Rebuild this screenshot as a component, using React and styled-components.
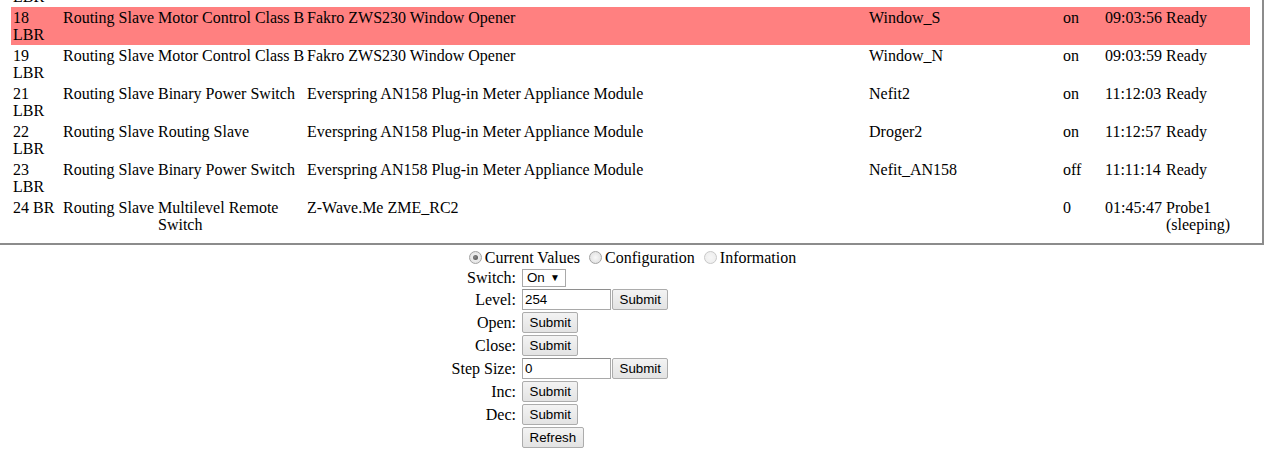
import React, { useState } from "react";
import styled, { createGlobalStyle } from "styled-components";

const GlobalStyle = createGlobalStyle`
  html, body {
    margin: 0;
    padding: 0;
    background: #ffffff;
  }
  body {
    font-family: "Liberation Serif", "Times New Roman", serif;
    font-size: 16px;
    color: #000000;
  }
`;

const columns = [
  { key: "node", width: 50 },
  { key: "basic", width: 95, nowrap: true },
  { key: "generic", width: 149 },
  { key: "product", width: 562 },
  { key: "name", width: 194 },
  { key: "level", width: 42 },
  { key: "time", width: 61 },
  { key: "state", width: 86 },
];

const nodes = [
  {
    id: "16",
    role: "LBR",
    basic: "Routing Slave",
    generic: "Binary Power Switch",
    product: "Everspring AN158 Plug-in Meter Appliance Module",
    name: "Pomp",
    level: "on",
    time: "08:52:10",
    state: "Ready",
  },
  {
    id: "17",
    role: "LBR",
    basic: "Routing Slave",
    generic: "Binary Power Switch",
    product: "Everspring AN158 Plug-in Meter Appliance Module",
    name: "Boiler",
    level: "on",
    time: "09:01:12",
    state: "Ready",
  },
  {
    id: "18",
    role: "LBR",
    basic: "Routing Slave",
    generic: "Motor Control Class B",
    product: "Fakro ZWS230 Window Opener",
    name: "Window_S",
    level: "on",
    time: "09:03:56",
    state: "Ready",
    selected: true,
  },
  {
    id: "19",
    role: "LBR",
    basic: "Routing Slave",
    generic: "Motor Control Class B",
    product: "Fakro ZWS230 Window Opener",
    name: "Window_N",
    level: "on",
    time: "09:03:59",
    state: "Ready",
  },
  {
    id: "21",
    role: "LBR",
    basic: "Routing Slave",
    generic: "Binary Power Switch",
    product: "Everspring AN158 Plug-in Meter Appliance Module",
    name: "Nefit2",
    level: "on",
    time: "11:12:03",
    state: "Ready",
  },
  {
    id: "22",
    role: "LBR",
    basic: "Routing Slave",
    generic: "Routing Slave",
    product: "Everspring AN158 Plug-in Meter Appliance Module",
    name: "Droger2",
    level: "on",
    time: "11:12:57",
    state: "Ready",
  },
  {
    id: "23",
    role: "LBR",
    basic: "Routing Slave",
    generic: "Binary Power Switch",
    product: "Everspring AN158 Plug-in Meter Appliance Module",
    name: "Nefit_AN158",
    level: "off",
    time: "11:11:14",
    state: "Ready",
  },
  {
    id: "24",
    role: "BR",
    basic: "Routing Slave",
    generic: "Multilevel Remote Switch",
    product: "Z-Wave.Me ZME_RC2",
    name: "",
    level: "0",
    time: "01:45:47",
    state: "Probe1 (sleeping)",
  },
];

// node list box, scrolled down to its last rows
const NodeBox = styled.div`
  box-sizing: border-box;
  width: 1264px;
  height: 245px;
  padding: 0 12px 8px 11px;
  border-right: 2px solid #8c8c8c;
  border-bottom: 2px solid #8c8c8c;
  overflow: hidden;
  display: flex;
  flex-direction: column;
  justify-content: flex-end;
`;

const NodeTable = styled.table`
  flex-shrink: 0;
  width: 100%;
  table-layout: fixed;
  border-collapse: collapse;
  border-spacing: 0;
  font-size: 16px;
  line-height: 17px;
`;

const NodeRow = styled.tr`
  background: ${(p) => (p.$selected ? "#ff8080" : "transparent")};
`;

const Cell = styled.td`
  box-sizing: border-box;
  padding: 2px 0 2px 2px;
  vertical-align: top;
  text-align: left;
  white-space: ${(p) => (p.$nowrap ? "nowrap" : "normal")};
`;

// form below the list
const Form = styled.div`
  margin-top: 2px;
  display: grid;
  grid-template-columns: 70px 302px;
  justify-content: center;
  column-gap: 6px;
  row-gap: 2px;
  align-items: center;
`;

const ModeRow = styled.div`
  grid-column: 1 / span 2;
  text-align: center;
  line-height: 19px;
  height: 18px;
  padding-top: 1px;
  padding-right: 10px;
`;

const ModeLabel = styled.label`
  cursor: default;
`;

const Radio = styled.input.attrs({ type: "radio" })`
  appearance: none;
  -webkit-appearance: none;
  box-sizing: border-box;
  width: 13px;
  height: 13px;
  margin: 3px 3px 0 5px;
  border-radius: 50%;
  border: 1px solid ${(p) => (p.disabled ? "#c8c8c8" : "#a2a2a2")};
  background: ${(p) =>
    p.disabled
      ? "radial-gradient(circle, #f6f6f6 0, #ececec 100%)"
      : "radial-gradient(circle, #f8f8f8 0, #dcdcdc 100%)"};
  vertical-align: -1px;
  position: relative;

  &:checked::after {
    content: "";
    position: absolute;
    left: 3px;
    top: 3px;
    width: 5px;
    height: 5px;
    border-radius: 50%;
    background: radial-gradient(circle at 40% 40%, #8a8a8a 0, #4a4a4a 100%);
  }
`;

const FieldLabel = styled.div`
  text-align: right;
  line-height: 19px;
  white-space: nowrap;
`;

const Controls = styled.div`
  display: flex;
  align-items: center;
  gap: 1px;
`;

const Button = styled.button`
  box-sizing: border-box;
  height: 21px;
  padding: 0 6.5px;
  font-family: "Liberation Sans", Arial, sans-serif;
  font-size: 13.333px;
  color: #000000;
  background: linear-gradient(#f3f3f3, #e3e3e3);
  border: 1px solid #acacac;
  border-radius: 2px;
`;

const TextBox = styled.input`
  box-sizing: border-box;
  width: 89px;
  height: 21px;
  padding: 1px 2px;
  font-family: "Liberation Sans", Arial, sans-serif;
  font-size: 13.333px;
  border: 1px solid #a9a9a9;
  border-top-color: #8e8e8e;
  outline: none;
`;

const Select = styled.div`
  box-sizing: border-box;
  width: 44px;
  height: 18px;
  display: flex;
  align-items: center;
  justify-content: space-between;
  padding: 0 5px 0 4px;
  font-family: "Liberation Sans", Arial, sans-serif;
  font-size: 13.333px;
  border: 1px solid #a9a9a9;
  background: #ffffff;
`;

const Caret = styled.span`
  font-size: 10px;
  line-height: 1;
`;

function nodeCell(n, key) {
  if (key === "node") return `${n.id} ${n.role}`;
  return n[key];
}

export default function App() {
  const [mode, setMode] = useState("current");
  const [level, setLevel] = useState("254");
  const [step, setStep] = useState("0");

  return (
    <>
      <GlobalStyle />
      <NodeBox>
        <NodeTable>
          <colgroup>
            {columns.map((c) => (
              <col key={c.key} style={{ width: c.width }} />
            ))}
          </colgroup>
          <tbody>
            {nodes.map((n) => (
              <NodeRow key={n.id} $selected={n.selected}>
                {columns.map((c) => (
                  <Cell key={c.key} $nowrap={c.nowrap}>
                    {nodeCell(n, c.key)}
                  </Cell>
                ))}
              </NodeRow>
            ))}
          </tbody>
        </NodeTable>
      </NodeBox>

      <Form>
        <ModeRow>
          <ModeLabel>
            <Radio
              name="mode"
              checked={mode === "current"}
              onChange={() => setMode("current")}
            />
            Current Values
          </ModeLabel>{" "}
          <ModeLabel>
            <Radio
              name="mode"
              checked={mode === "config"}
              onChange={() => setMode("config")}
            />
            Configuration
          </ModeLabel>{" "}
          <ModeLabel>
            <Radio name="mode" disabled checked={false} onChange={() => {}} />
            Information
          </ModeLabel>
        </ModeRow>

        <FieldLabel>Switch:</FieldLabel>
        <Controls>
          <Select>
            On <Caret>▼</Caret>
          </Select>
        </Controls>

        <FieldLabel>Level:</FieldLabel>
        <Controls>
          <TextBox value={level} onChange={(e) => setLevel(e.target.value)} />
          <Button>Submit</Button>
        </Controls>

        <FieldLabel>Open:</FieldLabel>
        <Controls>
          <Button>Submit</Button>
        </Controls>

        <FieldLabel>Close:</FieldLabel>
        <Controls>
          <Button>Submit</Button>
        </Controls>

        <FieldLabel>Step Size:</FieldLabel>
        <Controls>
          <TextBox value={step} onChange={(e) => setStep(e.target.value)} />
          <Button>Submit</Button>
        </Controls>

        <FieldLabel>Inc:</FieldLabel>
        <Controls>
          <Button>Submit</Button>
        </Controls>

        <FieldLabel>Dec:</FieldLabel>
        <Controls>
          <Button>Submit</Button>
        </Controls>

        <FieldLabel />
        <Controls>
          <Button>Refresh</Button>
        </Controls>
      </Form>
    </>
  );
}
